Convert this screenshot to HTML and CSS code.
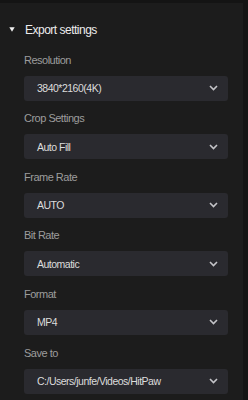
FILE: index.html
```html
<!DOCTYPE html>
<html lang="en">
<head>
    <meta charset="utf-8">
    <title>Export settings</title>
    <link rel="stylesheet" href="styles.css">
</head>
<body>
    <div class="panel">
        <div class="sec-head">
            <svg class="caret" width="6" height="5" viewBox="0 0 6 5"><polygon points="0.3,0.3 5.7,0.3 3,4.8" fill="#f0f0f0"/></svg>
            <h2>Export settings</h2>
        </div>
        <div class="field">
            <label>Resolution</label>
            <div class="sel"><span>3840*2160(4K)</span><svg class="chev" width="9" height="6" viewBox="0 0 9 6"><polyline points="1,1 4.5,4.5 8,1" fill="none" stroke="#c4c4c8" stroke-width="1.6"/></svg></div>
        </div>
        <div class="field">
            <label>Crop Settings</label>
            <div class="sel"><span>Auto Fill</span><svg class="chev" width="9" height="6" viewBox="0 0 9 6"><polyline points="1,1 4.5,4.5 8,1" fill="none" stroke="#c4c4c8" stroke-width="1.6"/></svg></div>
        </div>
        <div class="field">
            <label>Frame Rate</label>
            <div class="sel"><span>AUTO</span><svg class="chev" width="9" height="6" viewBox="0 0 9 6"><polyline points="1,1 4.5,4.5 8,1" fill="none" stroke="#c4c4c8" stroke-width="1.6"/></svg></div>
        </div>
        <div class="field">
            <label>Bit Rate</label>
            <div class="sel"><span>Automatic</span><svg class="chev" width="9" height="6" viewBox="0 0 9 6"><polyline points="1,1 4.5,4.5 8,1" fill="none" stroke="#c4c4c8" stroke-width="1.6"/></svg></div>
        </div>
        <div class="field">
            <label>Format</label>
            <div class="sel"><span>MP4</span><svg class="chev" width="9" height="6" viewBox="0 0 9 6"><polyline points="1,1 4.5,4.5 8,1" fill="none" stroke="#c4c4c8" stroke-width="1.6"/></svg></div>
        </div>
        <div class="field">
            <label>Save to</label>
            <div class="sel"><span>C:/Users/junfe/Videos/HitPaw</span><svg class="chev" width="9" height="6" viewBox="0 0 9 6"><polyline points="1,1 4.5,4.5 8,1" fill="none" stroke="#c4c4c8" stroke-width="1.6"/></svg></div>
        </div>
    </div>
</body>
</html>
```

FILE: styles.css
```css
html, body { margin: 0; height: 100%; background: #141414; overflow: hidden; }
body { font-family: "Liberation Sans", Arial, sans-serif; }
.panel { margin: 3px 5px 0 0; height: 100%; box-sizing: border-box; padding: 16.6px 15px 0 24px; background: #1c1c1c; }
.sec-head { display: flex; align-items: center; gap: 10px; margin: 0 0 12px -15px; height: 20px; }
.sec-head h2 { margin: 0; font-size: 12px; letter-spacing: -0.5px; line-height: 20px; font-weight: normal; color: #ececec; }
.caret { display: block; }
.field { margin-bottom: 9.6px; }
.field label { display: block; font-size: 11px; letter-spacing: -0.5px; line-height: 16px; color: #9c9c9c; margin-bottom: 8px; }
.sel { display: flex; align-items: center; justify-content: space-between; height: 25px; padding: 0 10px 0 13px; border-radius: 3px; background: #2a2a2f; }
.sel span { font-size: 10.5px; letter-spacing: -0.5px; color: #dcdcdc; }
.chev { display: block; }
```
